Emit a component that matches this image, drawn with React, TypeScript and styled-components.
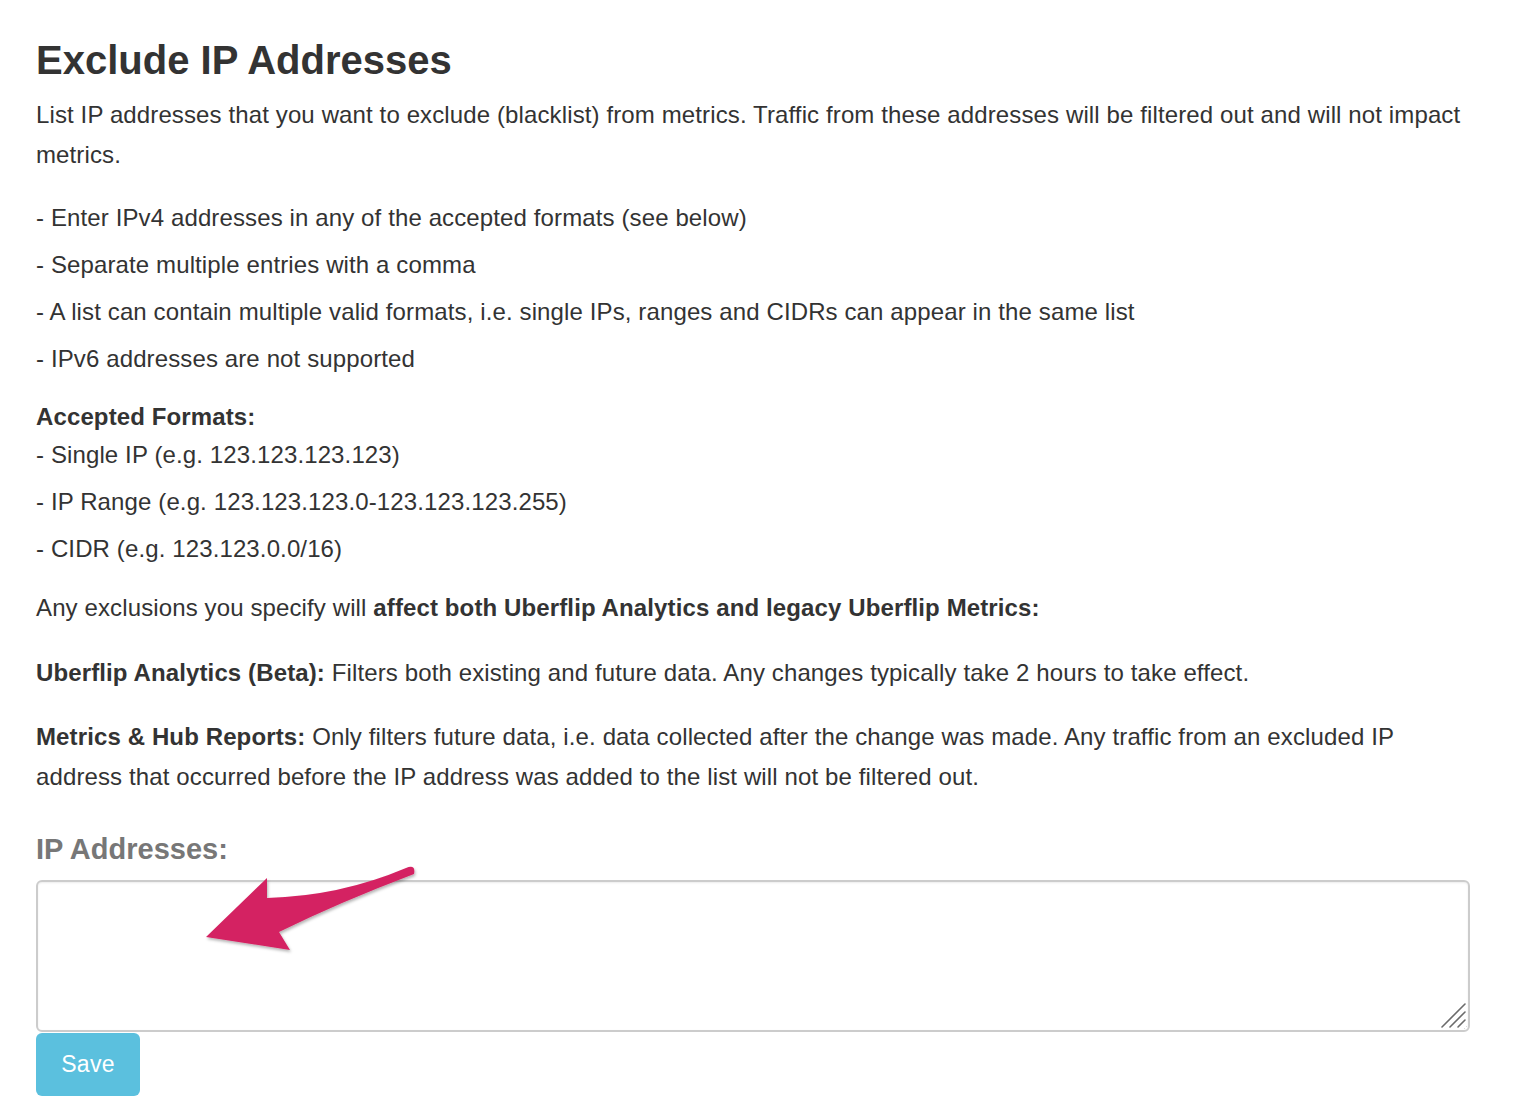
import React from 'react';
import styled, { createGlobalStyle } from 'styled-components';

const GlobalStyle = createGlobalStyle`
  html, body {
    margin: 0;
    padding: 0;
    background: #fff;
  }
  body {
    font-family: "Liberation Sans", Arial, Helvetica, sans-serif;
    color: #333;
  }
`;

const Page = styled.div`
  padding: 36px 52px 20px 36px;
  font-size: 24px;
  line-height: 40px;
  letter-spacing: 0.12px;
`;

const Title = styled.h1`
  margin: 0 0 11px;
  font-size: 40px;
  line-height: 48px;
  font-weight: 700;
  letter-spacing: 0;
  color: #333;
`;

const Text = styled.p<{ $gap?: number }>`
  margin: ${(p) => p.$gap ?? 0}px 0 0;
`;

const List = styled.div<{ $gap: number }>`
  display: flex;
  flex-direction: column;
  gap: 7px;
  margin-top: ${(p) => p.$gap}px;
`;

const ListHeading = styled.div`
  font-weight: 700;
  line-height: 36px;
  margin-bottom: -7px;
`;

const Label = styled.label`
  display: block;
  margin-top: 32px;
  font-size: 29px;
  line-height: 40px;
  font-weight: 700;
  letter-spacing: 0;
  color: #777;
`;

const Field = styled.div`
  position: relative;
  margin-top: 11px;
`;

const Input = styled.textarea`
  display: block;
  box-sizing: border-box;
  width: 100%;
  height: 152px;
  margin: 0;
  padding: 12px 16px;
  border: 2px solid #ccc;
  border-radius: 6px;
  box-shadow: inset 0 1px 2px rgba(0, 0, 0, 0.08);
  font-family: inherit;
  font-size: 24px;
  color: #333;
  outline: none;
`;

const Arrow = styled.svg`
  position: absolute;
  left: 154px;
  top: -20px;
  width: 240px;
  height: 100px;
  pointer-events: none;
  overflow: visible;
`;

const Grip = styled.svg`
  position: absolute;
  right: 3px;
  bottom: 3px;
  width: 27px;
  height: 27px;
  background: #fff;
  border-bottom-right-radius: 4px;
  pointer-events: none;
`;

const SaveButton = styled.button`
  display: block;
  margin-top: 1px;
  width: 104px;
  height: 63px;
  border: none;
  border-radius: 6px;
  background: #5bc0de;
  color: #fff;
  font-family: inherit;
  font-size: 23px;
  letter-spacing: 0.3px;
  cursor: pointer;
`;

const bullets = [
  '- Enter IPv4 addresses in any of the accepted formats (see below)',
  '- Separate multiple entries with a comma',
  '- A list can contain multiple valid formats, i.e. single IPs, ranges and CIDRs can appear in the same list',
  '- IPv6 addresses are not supported',
];

const formats = [
  '- Single IP (e.g. 123.123.123.123)',
  '- IP Range (e.g. 123.123.123.0-123.123.123.255)',
  '- CIDR (e.g. 123.123.0.0/16)',
];

export default function App() {
  return (
    <Page>
      <GlobalStyle />
      <Title>Exclude IP Addresses</Title>
      <Text>
        List IP addresses that you want to exclude (blacklist) from metrics. Traffic from these
        addresses will be filtered out and will not impact metrics.
      </Text>

      <List $gap={23}>
        {bullets.map((b) => (
          <div key={b}>{b}</div>
        ))}
      </List>

      <List $gap={20}>
        <ListHeading>Accepted Formats:</ListHeading>
        {formats.map((f) => (
          <div key={f}>{f}</div>
        ))}
      </List>

      <Text $gap={19}>
        Any exclusions you specify will <b>affect both Uberflip Analytics and legacy Uberflip Metrics:</b>
      </Text>
      <Text $gap={25}>
        <b>Uberflip Analytics (Beta):</b> Filters both existing and future data. Any changes typically
        take 2 hours to take effect.
      </Text>
      <Text $gap={24}>
        <b>Metrics &amp; Hub Reports:</b> Only filters future data, i.e. data collected after the change
        was made. Any traffic from an excluded IP address that occurred before the IP address was added
        to the list will not be filtered out.
      </Text>

      <Label htmlFor="ips">IP Addresses:</Label>
      <Field>
        <Input id="ips" />
        <Grip viewBox="0 0 27 27">
          <g stroke="#6b6b6b" strokeWidth="1.6" strokeLinecap="round">
            <line x1="2" y1="25" x2="25" y2="2" />
            <line x1="10" y1="25" x2="25" y2="10" />
            <line x1="18" y1="25" x2="25" y2="18" />
          </g>
        </Grip>
        <Arrow viewBox="0 0 240 100">
          <defs>
            <filter id="arrowShadow" x="-10%" y="-10%" width="130%" height="140%">
              <feDropShadow dx="1" dy="2" stdDeviation="1.5" floodColor="#000" floodOpacity="0.3" />
            </filter>
          </defs>
          <path
            d="M16 77 L77 18 L77 38 Q150 36 216 8 Q226 4 224 14 Q150 42 89 72 L100 90 Z"
            fill="#d42362"
            filter="url(#arrowShadow)"
          />
        </Arrow>
      </Field>
      <SaveButton type="button">Save</SaveButton>
    </Page>
  );
}
